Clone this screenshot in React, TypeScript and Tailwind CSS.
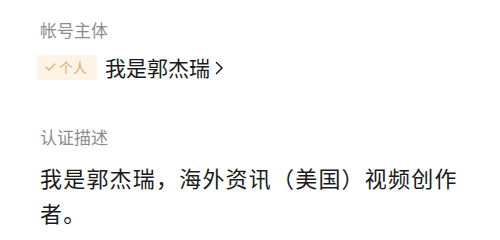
export default function App() {
  return (
    <div
      className="h-[240px] w-[500px] bg-white pl-10 pr-8 pt-[18px]"
      style={{ fontFamily: '"Noto Sans CJK SC", "Noto Sans", sans-serif' }}
    >
      <div className="text-[17px] leading-[24px] text-[#8c8c8c]">帐号主体</div>
      <div className="mt-[10px] flex h-[30px] items-center">
        <span className="-ml-[3px] flex h-[25px] items-center gap-[3px] bg-[#fdf3e6] pl-[8px] pr-[10px] text-[14px] text-[#dcae6e]">
          <svg width="11" height="8" viewBox="0 0 11 8" fill="none">
            <path d="M1 4l3 3 6-6" stroke="#dcae6e" strokeWidth="1.4" strokeLinecap="round" strokeLinejoin="round" />
          </svg>
          个人
        </span>
        <span className="ml-[8px] text-[21px] leading-[30px] text-[#1a1a1a]">我是郭杰瑞</span>
        <svg className="ml-[5px] mt-[2px]" width="9" height="14" viewBox="0 0 9 14" fill="none">
          <path d="M1.5 1.5l5.5 5.5-5.5 5.5" stroke="#1a1a1a" strokeWidth="1.5" strokeLinecap="round" strokeLinejoin="round" />
        </svg>
      </div>
      <div className="mt-[43px] text-[17px] leading-[24px] text-[#8c8c8c]">认证描述</div>
      <div className="mt-[11px] text-[22px] leading-[35px] tracking-[1.2px] text-[#1a1a1a]">
        我是郭杰瑞，海外资讯（美国）视频创作者。
      </div>
    </div>
  );
}
